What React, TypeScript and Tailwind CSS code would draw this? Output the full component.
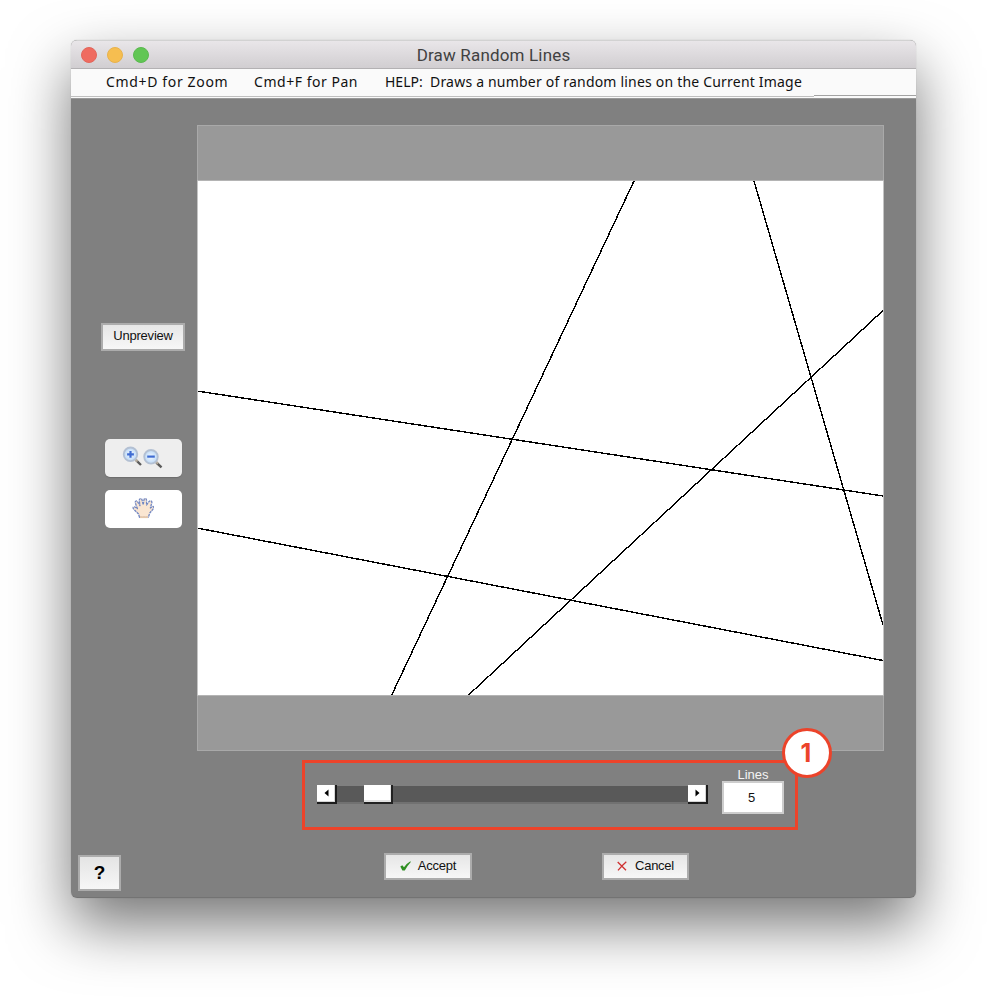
import React from 'react'

interface Line {
  x1: number
  y1: number
  x2: number
  y2: number
}

const lines: Line[] = [
  { x1: 437, y1: 0, x2: 194.5, y2: 514.5 },
  { x1: 557, y1: 0, x2: 686, y2: 444 },
  { x1: 686, y1: 129.5, x2: 271, y2: 514.5 },
  { x1: 0, y1: 210, x2: 686, y2: 315 },
  { x1: 0, y1: 347, x2: 686, y2: 479.5 },
]

function TitleBar() {
  return (
    <div className="relative h-[29px] flex items-center gap-[10px] px-[10px] bg-gradient-to-b from-[#e9e6e9] to-[#d1ced1] border-t border-b border-t-[#d2d2d2] border-b-[#b3b1b3]">
      <span className="w-4 h-4 rounded-full bg-[#ef6b60] border border-[#e2665b]" />
      <span className="w-4 h-4 rounded-full bg-[#f6be50] border border-[#e8b24c]" />
      <span className="w-4 h-4 rounded-full bg-[#61c654] border border-[#5bb950]" />
      <div className="absolute inset-x-0 top-[2px] text-center font-['Roboto'] text-[17px] leading-[24px] tracking-[0.17px] text-[#414141]">
        <span>Draw Random Lines</span>
      </div>
    </div>
  )
}

function MenuBar() {
  return (
    <div className="relative h-[30px] flex bg-[#fafafa] pl-[35px] font-['Noto_Sans',sans-serif] text-[14px] leading-[26px] text-[#111] whitespace-pre border-b border-[#999]">
      <div className="w-[148px] tracking-[0.65px]">Cmd+D for Zoom</div>
      <div className="w-[131px] tracking-[0.53px]">Cmd+F for Pan</div>
      <div className="w-[45px]">HELP:</div>
      <div className="tracking-[0.2px]">Draws a number of random lines on the Current Image</div>
      <div className="absolute left-0 bottom-px w-[743px] h-px bg-[#c0c0c0]" />
      <div className="absolute right-0 bottom-[2px] w-[102px] h-px bg-[#a3a3a3]" />
    </div>
  )
}

function ZoomIcon() {
  return (
    <svg width="42" height="24" viewBox="0 0 42 24" className="block">
      <defs>
        <radialGradient id="lens">
          <stop offset="0" stopColor="#f4faff" />
          <stop offset="1" stopColor="#bcd8f6" />
        </radialGradient>
      </defs>
      <path d="M14 14.2l5 4.8" stroke="#5b5b5b" strokeWidth="2.4" />
      <path d="M13 13l2.5 2.5" stroke="#b8ad9c" strokeWidth="2" />
      <circle cx="8.5" cy="8.3" r="6.8" fill="url(#lens)" stroke="#b3c0d3" strokeWidth="1.8" />
      <path d="M5.1 8.3h6.8M8.5 4.9v6.8" stroke="#3f6cd2" strokeWidth="2.2" />
      <path d="M34.3 16.5l5.2 4.8" stroke="#5b5b5b" strokeWidth="2.4" />
      <path d="M33.5 15.3l2.5 2.5" stroke="#b8ad9c" strokeWidth="2" />
      <circle cx="29" cy="10.8" r="6.8" fill="url(#lens)" stroke="#b3c0d3" strokeWidth="1.8" />
      <path d="M25.2 10.6h7.6" stroke="#3f6cd2" strokeWidth="2.2" />
    </svg>
  )
}

function HandIcon() {
  return (
    <svg width="22" height="22" viewBox="0 0 22 22" className="block">
      <path
        d="M7.5 20.3L6.5 17 2 12.5C.5 11 1 9.3 3 10L5.4 11.6 3.3 6C2.8 4 4.8 3.2 5.7 5L8 8.6 7.3 3.6C7.2 1.3 9.4 1 10 2.8L11.2 7.8 12 2.8C12.4 1 14.4 1.2 14.5 3L14.6 8 17 4.6C18.2 3 20.2 4 19.8 5.8L18.4 11 20.4 9.6C22 8.8 22 10.6 21 12.2L17.8 16 16.3 20.3Z"
        fill="#fae6d2"
        stroke="#7388c2"
        strokeWidth="1.3"
        strokeDasharray="2.6 0.7"
        strokeLinejoin="round"
      />
      <path d="M8 20.2h8" stroke="#e5c8ab" strokeWidth="1.8" />
    </svg>
  )
}

function SideBar() {
  return (
    <div className="w-[126px] shrink-0 flex flex-col items-center pt-[198px] pl-[18px]">
      <button className="w-[84px] h-[28px] border-2 border-[#acacac] bg-gradient-to-b from-[#e6e6e6] to-[#f7f7f7] text-[13px] leading-[22px] pb-[2px] tracking-[-0.2px] text-[#111]">
        Unpreview
      </button>
      <button className="mt-[88px] w-[77px] h-[38px] rounded-[5px] bg-[#eeeeee] shadow-[0_1px_1px_#6c6c6c] flex justify-center pt-[7px]">
        <ZoomIcon />
      </button>
      <button className="mt-[13px] w-[77px] h-[38px] rounded-[5px] bg-white flex justify-center pt-[7px]">
        <HandIcon />
      </button>
    </div>
  )
}

function Preview() {
  return (
    <div className="w-[687px] h-[626px] mb-px bg-[#999] border border-[#a9a9a9] flex flex-col pt-[54px]">
      <div className="h-[516px] -mx-px border border-y-[#b4b4b4] border-x-[#c4c4c4] bg-white overflow-hidden">
        <svg width="686" height="514.5" viewBox="0 0 686 514.5" className="block -ml-px" shapeRendering="crispEdges">
          {lines.map((l, i) => (
            <line key={i} x1={l.x1} y1={l.y1} x2={l.x2} y2={l.y2} stroke="#000" strokeWidth="1.4" />
          ))}
        </svg>
      </div>
    </div>
  )
}

function ArrowButton({ dir }: { dir: 'left' | 'right' }) {
  return (
    <div className="w-[20px] h-[19px] shrink-0 bg-white border-r-2 border-b-2 border-[#1c1c1c] shadow-[inset_-1px_-1px_0_#d5d5d5] flex items-center justify-center">
      <svg width="5" height="8" viewBox="0 0 5 8" className="-mt-px">
        <path d={dir === 'left' ? 'M4.5 0.5v7L0.5 4z' : 'M0.5 0.5v7L4.5 4z'} fill="#000" />
      </svg>
    </div>
  )
}

function LinesPanel() {
  return (
    <div className="relative ml-[231px] mt-[8px] w-[496px] h-[70px] border-[3px] border-[#ec432a] flex">
      <div className="ml-[12px] mt-[22px] w-[391px] h-[19px] flex">
        <ArrowButton dir="left" />
        <div className="flex-1 mt-px h-[18px] bg-[#595959] border-b-2 border-[#717171] pl-[27px]">
          <div className="-mt-px w-[29px] h-[19px] bg-white border-r-2 border-b-2 border-[#222] shadow-[inset_-1px_-2px_0_#e2e2e2]" />
        </div>
        <ArrowButton dir="right" />
      </div>
      <div className="ml-[14px] mt-[4px] w-[62px] text-center text-[13px] text-[#f4f4f4]">
        <div className="h-[14px] leading-[16px]">Lines</div>
        <div className="h-[33px] bg-white border-2 border-[#cdcdcd] text-[#111] leading-[29px] pr-[3px]">5</div>
      </div>
      <div className="absolute -top-[35px] left-[477px] w-[50px] h-[50px] rounded-full bg-white border-[3px] border-[#ec432a] flex items-center justify-center pr-[2px] font-['Inter'] text-[25px] leading-none font-bold text-[#ec432a]">
        1
      </div>
    </div>
  )
}

function Actions() {
  return (
    <div className="relative flex mt-[23px] pl-[7px]">
      <button className="mt-[2px] w-[43px] h-[36px] border-2 border-[#acacac] bg-gradient-to-b from-[#e4e4e4] to-[#f7f7f7] text-[19px] font-bold leading-[32px] text-black">
        ?
      </button>
      <button className="ml-[263px] w-[88px] h-[27px] border-2 border-[#acacac] bg-gradient-to-b from-[#e6e6e6] to-[#f7f7f7] text-[13px] tracking-[-0.2px] text-[#111] flex items-center justify-center gap-[7px] pb-px">
        <svg width="11" height="10" viewBox="0 0 11 10" className="-mt-px">
          <path d="M0.3 5.6L2.3 4.3 4 6.2Q6.5 2.6 10.4 0.3L10.8 1Q7.5 4.6 4.8 9.4L2.4 9.4Z" fill="#2f8f22" />
        </svg>
        Accept
      </button>
      <button className="ml-[130px] w-[87px] h-[27px] border-2 border-[#acacac] bg-gradient-to-b from-[#e6e6e6] to-[#f7f7f7] text-[13px] tracking-[-0.25px] text-[#111] flex items-center justify-center gap-[8px] pb-px">
        <svg width="10" height="10" viewBox="0 0 10 10" className="-mt-px">
          <path d="M0.7 1L9 9.3M9.3 0.7Q5 4.5 1 9.3" stroke="#cf3030" strokeWidth="1.3" fill="none" />
        </svg>
        Cancel
      </button>
    </div>
  )
}

export default function App() {
  return (
    <div className="w-[987px] h-[1000px] bg-white pt-[40px] pl-[71px] overflow-hidden font-['Liberation_Sans',Arial,sans-serif]">
      <div className="w-[845px] h-[858px] rounded-[6px] shadow-[0_27px_60px_rgba(0,0,0,0.54),0_0_1px_rgba(0,0,0,0.3)]">
        <div className="w-full h-full rounded-[6px] overflow-hidden bg-[#808080] border-b border-[#737373]">
          <TitleBar />
          <MenuBar />
          <div className="flex pt-[26px]">
            <SideBar />
            <Preview />
          </div>
          <LinesPanel />
          <Actions />
        </div>
      </div>
    </div>
  )
}
